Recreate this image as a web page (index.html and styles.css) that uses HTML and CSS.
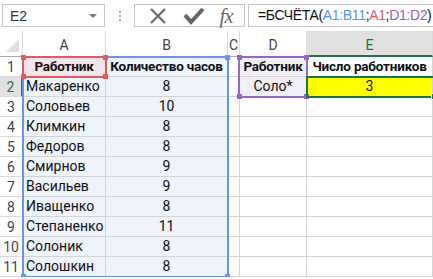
FILE: index.html
```html
<!DOCTYPE html>
<html lang="ru">
<head>
    <meta charset="UTF-8">
    <title>БСЧЁТА</title>
    <link rel="stylesheet" href="styles.css">
</head>
<body>
    <div class="toolbar">
        <div class="namebox">
            <span>E2</span>
            <span class="arrow"></span>
        </div>
        <div class="grip">
            <i></i><i></i><i></i>
        </div>
        <div class="buttons">
            <svg width="20" height="20" viewBox="0 0 20 20">
                <path d="M3 3 L17 17 M17 3 L3 17" stroke="#6a6a6a" stroke-width="2.2" fill="none"/>
            </svg>
            <svg width="22" height="20" viewBox="0 0 22 20">
                <path d="M2 9 L8 16 L20 3" stroke="#666666" stroke-width="4" fill="none"/>
            </svg>
            <span class="fx">fx</span>
        </div>
        <div class="formula">
            =БСЧЁТА(<span class="c-blue">A1:B11</span>;<span class="c-red">A1</span>;<span class="c-purple">D1:D2</span>)
        </div>
    </div>

    <div class="sheet">
        <div class="corner"><span class="tri"></span></div>
        <div class="colhead">A</div>
        <div class="colhead">B</div>
        <div class="colhead">C</div>
        <div class="colhead">D</div>
        <div class="colhead active">E</div>

        <div class="rowhead">1</div>
        <div class="cell pink bold center">Работник</div>
        <div class="cell blue bold center">Количество часов</div>
        <div class="cell"></div>
        <div class="cell purple bold center">Работник</div>
        <div class="cell bold center">Число работников</div>

        <div class="rowhead active">2</div>
        <div class="cell blue">Макаренко</div>
        <div class="cell blue center">8</div>
        <div class="cell"></div>
        <div class="cell purple center">Соло*</div>
        <div class="cell yellow center">3</div>

        <div class="rowhead">3</div>
        <div class="cell blue">Соловьев</div>
        <div class="cell blue center">10</div>
        <div class="cell"></div><div class="cell"></div><div class="cell"></div>

        <div class="rowhead">4</div>
        <div class="cell blue">Климкин</div>
        <div class="cell blue center">8</div>
        <div class="cell"></div><div class="cell"></div><div class="cell"></div>

        <div class="rowhead">5</div>
        <div class="cell blue">Федоров</div>
        <div class="cell blue center">8</div>
        <div class="cell"></div><div class="cell"></div><div class="cell"></div>

        <div class="rowhead">6</div>
        <div class="cell blue">Смирнов</div>
        <div class="cell blue center">9</div>
        <div class="cell"></div><div class="cell"></div><div class="cell"></div>

        <div class="rowhead">7</div>
        <div class="cell blue">Васильев</div>
        <div class="cell blue center">9</div>
        <div class="cell"></div><div class="cell"></div><div class="cell"></div>

        <div class="rowhead">8</div>
        <div class="cell blue">Иващенко</div>
        <div class="cell blue center">8</div>
        <div class="cell"></div><div class="cell"></div><div class="cell"></div>

        <div class="rowhead">9</div>
        <div class="cell blue">Степаненко</div>
        <div class="cell blue center">11</div>
        <div class="cell"></div><div class="cell"></div><div class="cell"></div>

        <div class="rowhead">10</div>
        <div class="cell blue">Солоник</div>
        <div class="cell blue center">8</div>
        <div class="cell"></div><div class="cell"></div><div class="cell"></div>

        <div class="rowhead">11</div>
        <div class="cell blue">Солошкин</div>
        <div class="cell blue center">8</div>
        <div class="cell"></div><div class="cell"></div><div class="cell"></div>

        <!-- range highlights drawn over the grid -->
        <div class="range range-blue">
            <i class="h tl"></i><i class="h tr"></i><i class="h bl"></i><i class="h br"></i>
        </div>
        <div class="range range-red">
            <i class="h tl"></i><i class="h tr"></i><i class="h bl"></i><i class="h br"></i>
        </div>
        <div class="range range-purple">
            <i class="h tl"></i><i class="h tr"></i><i class="h bl"></i><i class="h br"></i>
        </div>
        <div class="range range-green">
            <i class="h br"></i>
        </div>
    </div>
</body>
</html>
```

FILE: styles.css
```css
* {
    box-sizing: border-box;
}

body {
    margin: 0;
    background: #ffffff;
    font-family: Roboto, "Liberation Sans", sans-serif;
    font-size: 14px;
    color: #222222;
    overflow: hidden;
}

/* top bar */
.toolbar {
    height: 31px;
    display: flex;
    align-items: flex-start;
    padding-top: 4px;
    padding-left: 2px;
}

.namebox {
    width: 103px;
    height: 23px;
    border: 1px solid #c6c6c6;
    display: flex;
    align-items: center;
    justify-content: space-between;
    padding: 0 7px 0 7px;
    font-family: "Liberation Sans", sans-serif;
    font-size: 14px;
    color: #333333;
}

.arrow {
    width: 0;
    height: 0;
    border-left: 4px solid transparent;
    border-right: 4px solid transparent;
    border-top: 4px solid #7a7a7a;
}

.grip {
    width: 30px;
    height: 23px;
    display: flex;
    flex-direction: column;
    align-items: center;
    justify-content: center;
    gap: 2px;
}

.grip i {
    width: 2px;
    height: 2px;
    background: #b5b5b5;
}

.buttons {
    width: 111px;
    height: 23px;
    border: 1px solid #c6c6c6;
    display: flex;
    align-items: center;
    justify-content: space-around;
    padding: 0 4px 0 6px;
    margin-left: -1px;
}

.fx {
    font-family: "Liberation Serif", serif;
    font-style: italic;
    font-size: 21px;
    line-height: 20px;
    color: #6a6a6a;
    letter-spacing: -1px;
}

.formula {
    flex: 1;
    height: 23px;
    margin-left: 3px;
    border: 1px solid #c6c6c6;
    border-right: none;
    padding-left: 9px;
    line-height: 21px;
    font-family: "Liberation Sans", sans-serif;
    font-size: 14px;
    letter-spacing: -0.35px;
    color: #111111;
    white-space: nowrap;
}

.c-blue { color: #5b8ff0; }
.c-red { color: #e35a5a; }
.c-purple { color: #8e5fc8; }

/* grid */
.sheet {
    position: relative;
    display: grid;
    grid-template-columns: 23px 83px 122px 12px 67px 126px;
    grid-template-rows: 26px repeat(11, 20px);
}

.corner,
.colhead,
.rowhead,
.cell {
    border-right: 1px solid #d4d4d4;
    border-bottom: 1px solid #d4d4d4;
    white-space: nowrap;
    overflow: hidden;
}

.corner {
    border-right-color: #dadada;
    border-bottom-color: #ababab;
    position: relative;
}

.tri {
    position: absolute;
    right: 3px;
    bottom: 4px;
    width: 0;
    height: 0;
    border-left: 13px solid transparent;
    border-bottom: 13px solid #dfdfdf;
}

.colhead {
    display: flex;
    align-items: center;
    justify-content: center;
    padding-top: 3px;
    color: #444444;
    border-right-color: #dadada;
    border-bottom-color: #ababab;
}

.colhead.active {
    background: #e1e1e1;
    color: #217346;
    border-bottom: 2px solid #217346;
}

.rowhead {
    display: flex;
    align-items: center;
    justify-content: center;
    color: #444444;
    border-right-color: #ababab;
    border-bottom-color: #dadada;
}

.rowhead.active {
    background: #e1e1e1;
    color: #217346;
    border-right: 2px solid #217346;
}

.cell {
    padding: 0 3px;
    line-height: 19px;
    color: #111111;
}

.center { text-align: center; }
.bold { font-weight: bold; font-size: 13.5px; letter-spacing: -0.2px; }

.blue { background: #eef3fc; }
.pink { background: #f4e4ec; }
.purple { background: #f2eef8; }
.yellow { background: #ffff00; }

/* coloured range frames */
.range {
    position: absolute;
    border: 2px solid;
    pointer-events: none;
}

.range-blue {
    border-color: #6694ee;
    left: 22px;
    top: 25px;
    width: 207px;
    height: 222px;
}

.range-red {
    border-color: #e35a5a;
    left: 22px;
    top: 25px;
    width: 85px;
    height: 22px;
}

.range-purple {
    border-color: #9467cc;
    left: 238px;
    top: 25px;
    width: 70px;
    height: 42px;
}

.range-green {
    border-color: #217346;
    left: 306px;
    top: 45px;
    width: 130px;
    height: 22px;
}

.h {
    position: absolute;
    width: 5px;
    height: 5px;
}

.range-blue .h { background: #6694ee; }
.range-red .h { background: #e35a5a; }
.range-purple .h { background: #9467cc; }
.range-green .h { background: #217346; border: 1px solid #ffffff; width: 7px; height: 7px; }

.tl { left: -3px; top: -3px; }
.tr { right: -3px; top: -3px; }
.bl { left: -3px; bottom: -3px; }
.br { right: -3px; bottom: -3px; }
.range-green .br { right: -4px; bottom: -4px; }
```
